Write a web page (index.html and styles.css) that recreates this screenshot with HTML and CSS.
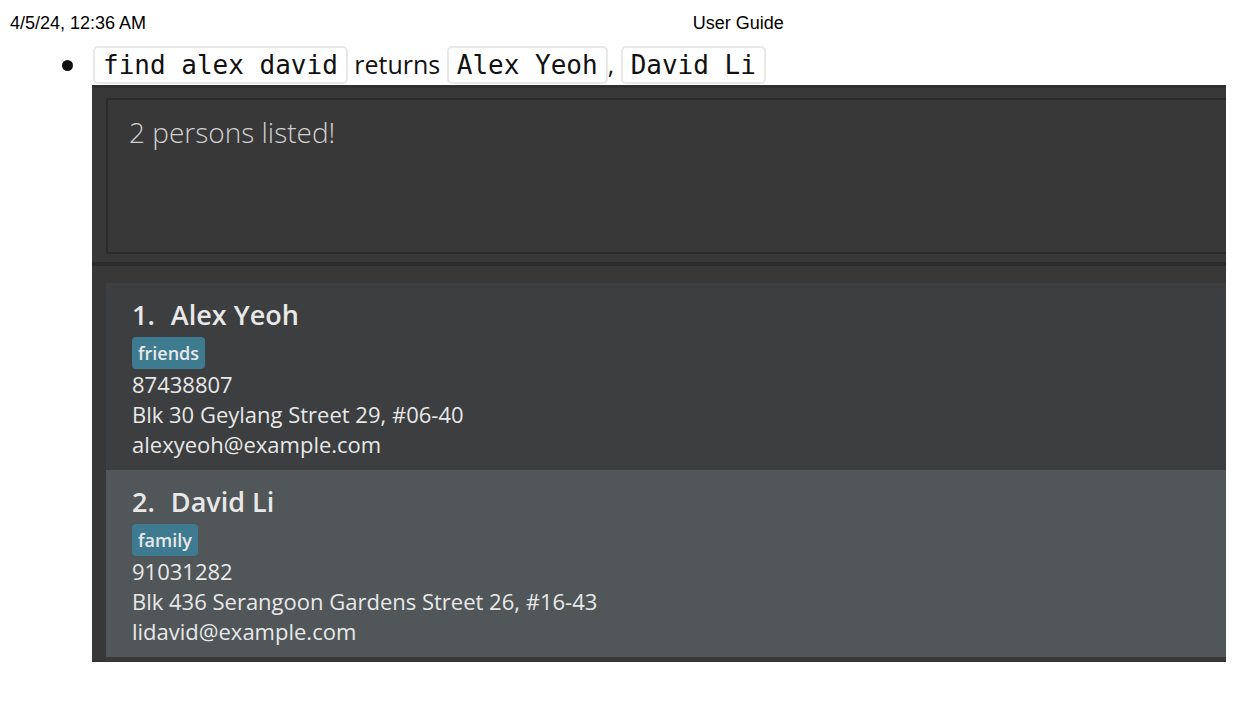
FILE: index.html
```html
<!DOCTYPE html>
<html lang="en">
<head>
<meta charset="utf-8">
<title>User Guide</title>
<link rel="stylesheet" href="styles.css">
</head>
<body>
<header class="page-header">
  <span>4/5/24, 12:36 AM</span>
  <span>User Guide</span>
</header>
<main class="guide">
  <ul class="examples">
    <li class="example">
      <p class="example-text"><code class="code">find alex david</code> returns <code class="code">Alex Yeoh</code>, <code class="code">David Li</code></p>
      <section class="app">
        <div class="result-area">
          <p class="result">2 persons listed!</p>
        </div>
        <div class="persons">
          <article class="person">
            <h2 class="name"><span>1.</span><span>Alex Yeoh</span></h2>
            <span class="tag">friends</span>
            <p class="detail">87438807</p>
            <p class="detail">Blk 30 Geylang Street 29, #06-40</p>
            <p class="detail">alexyeoh@example.com</p>
          </article>
          <article class="person person-even">
            <h2 class="name"><span>2.</span><span>David Li</span></h2>
            <span class="tag">family</span>
            <p class="detail">91031282</p>
            <p class="detail">Blk 436 Serangoon Gardens Street 26, #16-43</p>
            <p class="detail">lidavid@example.com</p>
          </article>
        </div>
      </section>
    </li>
  </ul>
</main>
</body>
</html>
```
FILE: styles.css
```css
* { box-sizing: border-box; }
body {
  margin: 0;
  background: #fff;
  color: #111;
  font-family: "Open Sans", "Noto Sans", sans-serif;
}
p, h2 { margin: 0; }
.page-header {
  display: grid;
  grid-template-columns: 54.8% 1fr;
  padding: 12px 0 0 10px;
  font: 18px/22px "Liberation Sans", Arial, sans-serif;
  color: #000;
}
.guide { padding: 11px 30px 0 60px; }
.examples { margin: 0; padding: 0; list-style: none; }
.example {
  display: grid;
  grid-template-columns: 32px minmax(0, 1fr);
}
.example::before {
  content: "";
  width: 11px;
  height: 11px;
  margin: 15px 0 0 2px;
  border-radius: 50%;
  background: #111;
}
.example-text {
  padding: 0 0 1px 1px;
  font-size: 25px;
  line-height: 38px;
}
.code {
  padding: 2px 8px;
  border: 2px solid #e8e8e8;
  border-radius: 5px;
  font-family: "DejaVu Sans Mono", monospace;
  font-size: 26px;
}
.app {
  grid-column: 2;
  background: #383838;
  border-top: 3px solid #2d302f;
  padding-bottom: 4px;
  border-bottom: 1px solid #303030;
}
.result-area {
  padding: 10px 0 8px 14px;
  border-bottom: 4px solid #2b2b2b;
}
.result {
  min-height: 156px;
  padding: 12px 21px;
  border: 2px solid #2b2b2b;
  border-right: 0;
  color: #d0d0d0;
  font-size: 28px;
  font-weight: 300;
  line-height: 40px;
}
.persons { padding: 17px 0 0 14px; }
.person {
  padding: 14px 26px 11px;
  background: #3c3e3f;
  color: #e8e8e8;
}
.person-even { background: #515658; }
.name {
  display: flex;
  gap: 16px;
  font-size: 27px;
  font-weight: 600;
  line-height: 36px;
}
.tag {
  display: block;
  width: fit-content;
  margin-top: 4px;
  padding: 0 6px;
  border-radius: 4px;
  background: #3e7b91;
  font-size: 18px;
  font-weight: 600;
  line-height: 32px;
}
.detail {
  font-size: 22px;
  line-height: 30px;
}
```
